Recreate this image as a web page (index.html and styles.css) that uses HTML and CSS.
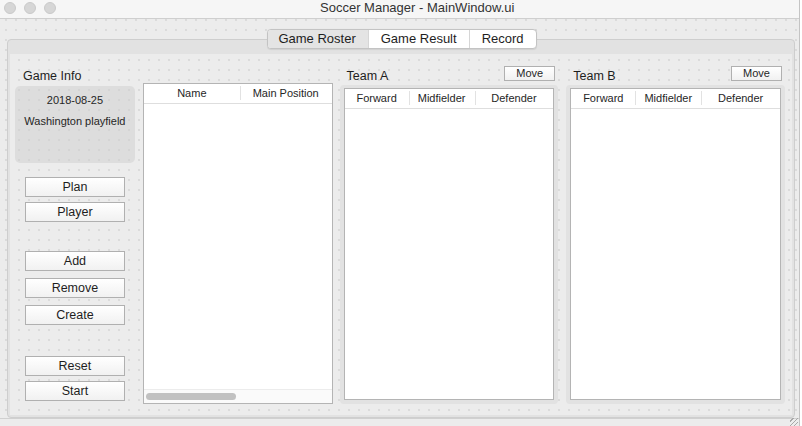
FILE: index.html
```html
<!DOCTYPE html>
<html>
<head>
<meta charset="utf-8">
<link rel="stylesheet" href="styles.css">
</head>
<body>
<div class="window">
  <div class="titlebar">
    <div class="lights"><span></span><span></span><span></span></div>
    <div class="title">Soccer Manager - MainWindow.ui</div>
  </div>
  <div class="main">
    <div class="tabwidget">
      <div class="tabbar">
        <div class="tab active">Game Roster</div>
        <div class="tab">Game Result</div>
        <div class="tab">Record</div>
      </div>
      <div class="pane">
        <div class="page">
          <div class="leftcol">
            <div class="label info-label">Game Info</div>
            <div class="infobox">
              <div class="info-line">2018-08-25</div>
              <div class="info-line">Washington playfield</div>
            </div>
            <div class="btn plan">Plan</div>
            <div class="btn gap5">Player</div>
            <div class="btn add">Add</div>
            <div class="btn gap7">Remove</div>
            <div class="btn gap7">Create</div>
            <div class="btn reset">Reset</div>
            <div class="btn gap5">Start</div>
          </div>
          <div class="namecol">
            <div class="table nametable">
              <div class="thead">
                <div class="th">Name</div>
                <div class="th">Main Position</div>
              </div>
              <div class="tbody"></div>
              <div class="hscroll"><div class="thumb"></div></div>
            </div>
          </div>
          <div class="teamcol">
            <div class="teamhead">
              <div class="label">Team A</div>
              <div class="smallbtn">Move</div>
            </div>
            <div class="frame">
              <div class="table teamtable">
                <div class="thead">
                  <div class="th">Forward</div>
                  <div class="th">Midfielder</div>
                  <div class="th">Defender</div>
                </div>
                <div class="tbody"></div>
              </div>
            </div>
          </div>
          <div class="teamcol">
            <div class="teamhead">
              <div class="label">Team B</div>
              <div class="smallbtn">Move</div>
            </div>
            <div class="frame">
              <div class="table teamtable">
                <div class="thead">
                  <div class="th">Forward</div>
                  <div class="th">Midfielder</div>
                  <div class="th">Defender</div>
                </div>
                <div class="tbody"></div>
              </div>
            </div>
          </div>
        </div>
      </div>
    </div>
    <div class="statusbar"><div class="grip"></div></div>
  </div>
</div>
</body>
</html>
```

FILE: styles.css
```css
* { box-sizing: border-box; }
html, body {
  margin: 0;
  padding: 0;
  width: 802px;
  height: 426px;
  overflow: hidden;
  background: #ffffff;
  font-family: "Liberation Sans", Arial, sans-serif;
  color: #262626;
}
.window {
  width: 800px;
  height: 426px;
  display: flex;
  flex-direction: column;
  border-right: 1px solid #c4c4c4;
}
.titlebar {
  height: 19px;
  flex: none;
  background: #f6f6f6;
  border-bottom: 1px solid #cfcfcf;
  display: flex;
  align-items: center;
}
.lights {
  display: flex;
  gap: 8px;
  padding-left: 4px;
  margin-top: -2px;
}
.lights span {
  width: 12px;
  height: 12px;
  border-radius: 50%;
  background: #d6d6d6;
  border: 1px solid #cacaca;
}
.title {
  margin-left: 264px;
  font-size: 13px;
  color: #333;
  margin-top: -3px;
}
.main {
  flex: 1;
  display: flex;
  flex-direction: column;
  background-color: #ececec;
  background-image: radial-gradient(circle at 1px 1px, #c6c6c6 0.6px, transparent 0.8px);
  background-size: 10px 10px;
  background-position: 5px 0px;
}
.tabwidget {
  flex: 1;
  display: flex;
  flex-direction: column;
  padding: 10px 4px 0 7px;
}
.tabbar {
  align-self: center;
  display: flex;
  height: 20px;
  margin-left: 2px;
  position: relative;
  z-index: 2;
  border: 1px solid #c3c3c3;
  border-radius: 4px;
  background: #fff;
  overflow: hidden;
  box-shadow: 0 0.5px 1px rgba(0,0,0,0.08);
}
.tab {
  font-size: 13px;
  line-height: 18px;
  padding: 0 12px;
  color: #1e1e1e;
  border-left: 1px solid #d6d6d6;
}
.tab:first-child { border-left: none; }
.tab.active { background: #e4e4e4; padding: 0 12px 0 10px; }
.tab:nth-child(2) { padding: 0 12px 0 12px; }
.tab:nth-child(3) { padding: 0 12px 0 12px; }
.pane {
  flex: 1;
  margin-top: -10px;
  background: #e2e2e2;
  border: 1px solid #cecece;
  border-radius: 4px;
  padding: 14px 2px 2px 2px;
  display: flex;
  flex-direction: column;
}
.page {
  flex: 1;
  display: flex;
  background-color: #ececec;
  background-image: radial-gradient(circle at 1px 1px, #c6c6c6 0.6px, transparent 0.8px);
  background-size: 10px 10px;
  background-position: 8px 5px;
  padding: 0 7px 11px 5px;
}
.label {
  font-size: 12.5px;
  color: #1e1e1e;
}
.leftcol {
  width: 120px;
  display: flex;
  flex-direction: column;
  align-items: center;
}
.info-label {
  align-self: flex-start;
  margin: 15px 0 0 8px;
  height: 17px;
}
.infobox {
  align-self: stretch;
  height: 77px;
  background: rgba(205,205,205,0.45);
  border-radius: 5px;
  display: flex;
  flex-direction: column;
  align-items: center;
  padding-top: 7px;
  gap: 7px;
}
.info-line {
  font-size: 11px;
  line-height: 14px;
  color: #262626;
}
.btn {
  width: 100px;
  height: 20px;
  border: 1px solid #b0b0b0;
  background: linear-gradient(#ffffff, #f1f1f1);
  font-size: 12.5px;
  line-height: 18px;
  text-align: center;
  color: #1e1e1e;
}
.plan { margin-top: 14px; }
.gap5 { margin-top: 5px; }
.gap7 { margin-top: 7px; }
.add { margin-top: 29px; }
.reset { margin-top: 31px; }
.namecol {
  width: 190px;
  margin-left: 8px;
  display: flex;
  flex-direction: column;
  padding-top: 29px;
}
.table {
  background: #fff;
  border: 1px solid #b4b4b4;
  display: flex;
  flex-direction: column;
}
.nametable { flex: 1; }
.thead {
  display: flex;
  height: 20px;
  border-bottom: 1px solid #dedede;
}
.th {
  font-size: 11px;
  line-height: 19px;
  text-align: center;
  color: #262626;
  position: relative;
}
.th + .th::before {
  content: "";
  position: absolute;
  left: 0;
  top: 2px;
  bottom: 3px;
  border-left: 1px solid #e2e2e2;
}
.nametable .th:nth-child(1) { width: 96px; }
.nametable .th:nth-child(2) { flex: 1; }
.tbody { flex: 1; }
.hscroll {
  height: 14px;
  background: #fafafa;
  border-top: 1px solid #ececec;
  padding: 3px 0 0 2px;
}
.thumb {
  width: 90px;
  height: 7px;
  border-radius: 4px;
  background: #c1c1c1;
}
.teamcol {
  width: 219px;
  margin-left: 7px;
  display: flex;
  flex-direction: column;
}
.teamcol + .teamcol { margin-left: 8px; }
.teamhead {
  height: 31px;
  display: flex;
  align-items: flex-end;
  justify-content: space-between;
  padding: 0 3px 0 7px;
}
.teamhead .label { line-height: 17px; }
.smallbtn {
  align-self: flex-start;
  margin-top: 12px;
  width: 51px;
  height: 15px;
  border: 1px solid #b0b0b0;
  background: linear-gradient(#ffffff, #f1f1f1);
  font-size: 11px;
  line-height: 13px;
  text-align: center;
  color: #262626;
}
.frame {
  flex: 1;
  background: #e2e2e2;
  border-radius: 4px;
  padding: 3px 4px 4px 4px;
  display: flex;
  flex-direction: column;
}
.teamtable { flex: 1; }
.teamtable .th:nth-child(1) { width: 64px; }
.teamtable .th:nth-child(2) { width: 66px; }
.teamtable .th:nth-child(3) { flex: 1; }
.statusbar {
  height: 8px;
  flex: none;
  border-top: 1px solid #d0d0d0;
  background: #ececec;
  position: relative;
}
.grip {
  position: absolute;
  right: 1px;
  bottom: 0;
  width: 8px;
  height: 8px;
  background: repeating-linear-gradient(135deg, transparent 0 2px, #a8a8a8 2px 3px);
}
```
